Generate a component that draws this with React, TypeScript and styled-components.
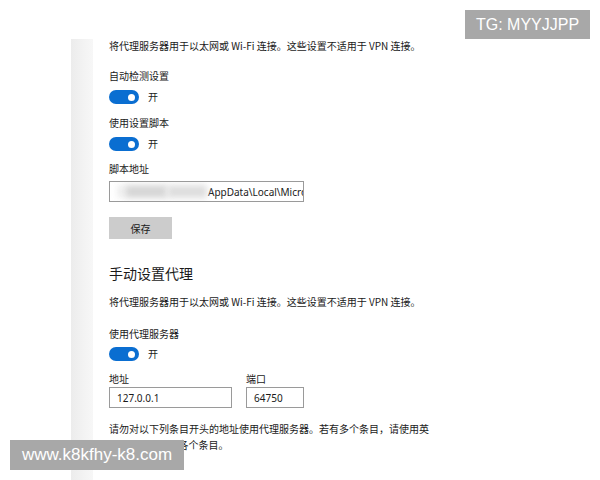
import React from "react";
import styled, { createGlobalStyle } from "styled-components";

const Global = createGlobalStyle`
  html, body { margin: 0; padding: 0; background: #ffffff; }
  body { font-family: "Noto Sans CJK SC", "Noto Sans", sans-serif; color: #1a1a1a; }
`;

const Page = styled.div`
  position: relative;
  width: 600px;
  height: 480px;
  overflow: hidden;
  background: #fff;
`;

const Frame = styled.div`
  display: flex;
  padding: 39px 0 0 71px;
  height: 441px;
`;

const Strip = styled.div`
  width: 22px;
  flex: none;
  background: linear-gradient(90deg, #ececec 0%, #f3f3f3 60%, #f7f7f7 100%);
`;

const Content = styled.div`
  display: flex;
  flex-direction: column;
  align-items: flex-start;
  padding-left: 16px;
  width: 380px;
`;

const Text = styled.div<{ $mt?: number }>`
  font-size: 10px;
  line-height: 14px;
  margin-top: ${(p) => p.$mt ?? 0}px;
  white-space: nowrap;
`;

const Para = styled.div<{ $mt?: number }>`
  font-size: 10px;
  line-height: 16px;
  margin-top: ${(p) => p.$mt ?? 0}px;
  width: 322px;
`;

const Heading = styled.div<{ $mt?: number }>`
  font-size: 14px;
  line-height: 22px;
  margin-top: ${(p) => p.$mt ?? 0}px;
  color: #1a1a1a;
`;

const ToggleRow = styled.div<{ $mt?: number }>`
  display: flex;
  align-items: center;
  gap: 9px;
  margin-top: ${(p) => p.$mt ?? 0}px;
  font-size: 10px;
  line-height: 14px;
`;

const Track = styled.div`
  width: 30px;
  height: 14px;
  border-radius: 7px;
  background: #0a6ed1;
  display: flex;
  align-items: center;
  justify-content: flex-end;
  padding-right: 4px;
  box-sizing: border-box;
`;

const Knob = styled.div`
  width: 7px;
  height: 7px;
  border-radius: 50%;
  background: #fff;
`;

const Input = styled.div<{ $w: number; $mt?: number }>`
  width: ${(p) => p.$w}px;
  height: 21px;
  box-sizing: border-box;
  border: 1.5px solid #9a9a9a;
  background: #fff;
  margin-top: ${(p) => p.$mt ?? 0}px;
  display: flex;
  align-items: center;
  padding-left: 7px;
  font-size: 10px;
  overflow: hidden;
  white-space: nowrap;
  font-family: "Noto Sans", "Noto Sans CJK SC", sans-serif;
`;

const Blur = styled.span<{ $w: number; $c: string }>`
  display: inline-block;
  width: ${(p) => p.$w}px;
  height: 13px;
  background: ${(p) => p.$c};
  filter: blur(3px);
  flex: none;
`;

const Button = styled.div<{ $mt?: number }>`
  width: 63px;
  height: 22px;
  background: #cccccc;
  margin-top: ${(p) => p.$mt ?? 0}px;
  display: flex;
  align-items: center;
  justify-content: center;
  font-size: 10px;
`;

const FieldRow = styled.div<{ $mt?: number }>`
  display: flex;
  gap: 14px;
  margin-top: ${(p) => p.$mt ?? 0}px;
`;

const Field = styled.div`
  display: flex;
  flex-direction: column;
  gap: 1px;
`;

const Watermark = styled.div<{ $pos: "tr" | "bl" }>`
  position: absolute;
  background: #a8a8a8;
  color: #fff;
  font-family: "Liberation Sans", Arial, sans-serif;
  display: flex;
  align-items: center;
  justify-content: center;
  ${(p) =>
    p.$pos === "tr"
      ? "top: 10px; left: 465px; width: 125px; height: 29px; font-size: 16px;"
      : "top: 440px; left: 10px; width: 174px; height: 30px; font-size: 17px;"}
`;

export default function App() {
  return (
    <Page>
      <Global />
      <Frame>
        <Strip />
        <Content>
          <Text>将代理服务器用于以太网或 Wi-Fi 连接。这些设置不适用于 VPN 连接。</Text>
          <Text $mt={16}>自动检测设置</Text>
          <ToggleRow $mt={7}>
            <Track><Knob /></Track>开
          </ToggleRow>
          <Text $mt={12}>使用设置脚本</Text>
          <ToggleRow $mt={7}>
            <Track><Knob /></Track>开
          </ToggleRow>
          <Text $mt={11}>脚本地址</Text>
          <Input $w={195} $mt={5}>
            <Blur $w={8} $c="#eeeeee" />
            <Blur $w={42} $c="#d6d6d6" />
            <Blur $w={40} $c="#dedede" />
            <span style={{ marginLeft: 1 }}>AppData\Local\Micro</span>
          </Input>
          <Button $mt={15}>保存</Button>
          <Heading $mt={23}>手动设置代理</Heading>
          <Text $mt={11}>将代理服务器用于以太网或 Wi-Fi 连接。这些设置不适用于 VPN 连接。</Text>
          <Text $mt={18}>使用代理服务器</Text>
          <ToggleRow $mt={6}>
            <Track><Knob /></Track>开
          </ToggleRow>
          <FieldRow $mt={11}>
            <Field>
              <Text>地址</Text>
              <Input $w={123}>127.0.0.1</Input>
            </Field>
            <Field>
              <Text>端口</Text>
              <Input $w={58}>64750</Input>
            </Field>
          </FieldRow>
          <Para $mt={13}>
            请勿对以下列条目开头的地址使用代理服务器。若有多个条目，请使用英文分号(;)来分隔各个条目。
          </Para>
        </Content>
      </Frame>
      <Watermark $pos="tr">TG: MYYJJPP</Watermark>
      <Watermark $pos="bl">www.k8kfhy-k8.com</Watermark>
    </Page>
  );
}
